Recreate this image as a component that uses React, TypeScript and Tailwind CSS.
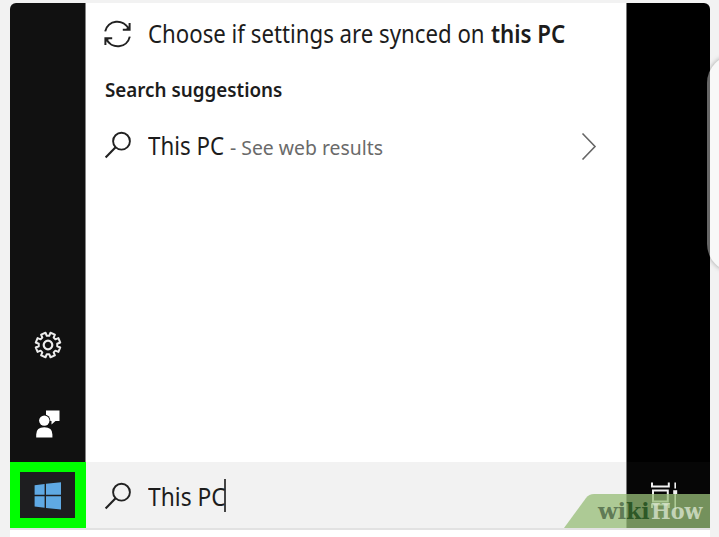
const SearchIcon = () => (
  <svg width="28" height="30" viewBox="0 0 28 30" fill="none" stroke="#222" strokeWidth="1.9">
    <circle cx="17.5" cy="11.2" r="8.4" />
    <path d="M11.6 17.2 1.6 27.4" strokeWidth="2.1" />
  </svg>
);

const SyncIcon = () => (
  <svg width="28" height="30" viewBox="0 0 28 30" fill="none" stroke="#222" strokeWidth="2">
    <path d="M1.2 12.4A12.4 12.4 0 0 1 24.6 10M25.6 4V10.8H18.8" />
    <path d="M25.8 17.6A12.4 12.4 0 0 1 2.4 20M1.4 26V19.2H8.2" />
    <path d="M25.6 6.5V10.8H21.3ZM1.4 23.5V19.2H5.7Z" fill="#222" stroke="none" />
  </svg>
);

// eight teeth, with a notch pointing straight up
const gearPoints = [22.5, 67.5, 112.5, 157.5, 202.5, 247.5, 292.5, 337.5]
  .flatMap((angle) => [
    [angle - 15, 9.3],
    [angle - 11, 12.5],
    [angle + 11, 12.5],
    [angle + 15, 9.3],
  ])
  .map(([angle, r]) => {
    const rad = (angle * Math.PI) / 180;
    return `${(r * Math.sin(rad)).toFixed(2)},${(-r * Math.cos(rad)).toFixed(2)}`;
  })
  .join(' ');

const GearIcon = () => (
  <svg width="28" height="28" viewBox="-14 -14 28 28" fill="none" stroke="#ececec" strokeWidth="2">
    <circle r="4.3" strokeWidth="2.2" />
    <polygon points={gearPoints} strokeLinejoin="round" />
  </svg>
);

const FeedbackIcon = () => (
  <svg width="26" height="28" viewBox="0 0 26 28" fill="#fff">
    <path d="M11 .6H24.5V11H20.5L16.5 14.4V11H11Z" />
    <circle cx="9.3" cy="10.6" r="6" fill="#111" />
    <circle cx="9.3" cy="10.6" r="5.2" />
    <path d="M1.2 27.6V24.4Q1.2 17.2 9.3 17.2T17.4 24.4V27.6Z" />
  </svg>
);

const WindowsIcon = () => (
  <svg width="28" height="28" viewBox="0 0 28 28" fill="#5fa9e3">
    <path d="M.6 3.3 10.6 1.9V12.8H.6ZM12 1.7 27 .2V12.8H12ZM.6 14.3H10.6V25.7L.6 24.6ZM12 14.3H27V27.4L12 25.9Z" />
  </svg>
);

const TaskViewIcon = () => (
  <svg width="28" height="28" viewBox="0 0 28 28" fill="none" stroke="#f2f2f2" strokeWidth="2">
    <path d="M1 .5V4.5H17.8V.5M1 26V22.5H17.8V26" />
    <path d="M2 8.5H16.8V19.5H2Z" />
    <path d="M24.2 .5V6.5M24.2 12V27" strokeWidth="1.6" />
    <path d="M22.2 8.2H26.2V12H22.2Z" fill="#f2f2f2" stroke="none" />
  </svg>
);

export default function App() {
  return (
    <div className="relative h-[537px] w-[719px] overflow-hidden bg-[#f2f2f2] px-[10px] pt-[3px] font-['Noto_Sans','Open_Sans',sans-serif] text-[#1c1c1c]">
      {/* Edge panel handle */}
      <div className="absolute top-[55px] left-[707px] h-[217px] w-[60px] rounded-[28px] bg-[#f8f8f8] shadow-[0_0_5px_rgba(0,0,0,0.35)]" />

      <div className="relative h-[534px] w-[700px] overflow-hidden rounded-t-[6px] bg-white">
        <div className="flex h-[525px]">
          {/* Start menu rail */}
          <aside className="flex w-[76px] shrink-0 flex-col">
            <div className="flex grow flex-col items-center justify-end border-r border-[#858585] bg-[#111] pb-[24px]">
              <GearIcon />
              <div className="mt-[51px]">
                <FeedbackIcon />
              </div>
            </div>
            <div className="flex h-[66px] items-center bg-[#00ff00] pl-[10px]">
              <div className="flex h-[46px] w-[55px] items-center justify-center bg-[#1e1e20] pt-[2px]">
                <WindowsIcon />
              </div>
            </div>
          </aside>

          {/* Results */}
          <main className="flex w-[540px] shrink-0 flex-col">
            <div className="flex h-[62px] items-center pl-[18px]">
              <SyncIcon />
              <p className="flex pl-[16px] text-[24.5px] leading-[30px] whitespace-pre">
                <span className="w-[343px] origin-left scale-x-[0.907]">Choose if settings are synced on</span>
                <span className="origin-left scale-x-[0.91] font-semibold">this PC</span>
              </p>
            </div>
            <h2 className="flex h-[50px] items-center pl-[19px] text-[20px] font-semibold whitespace-nowrap">
              <span className="origin-left scale-x-[0.94]">Search suggestions</span>
            </h2>
            <div className="flex h-[62px] items-center pl-[18px]">
              <div className="pb-[2px]">
                <SearchIcon />
              </div>
              <p className="flex items-baseline pl-[16px] text-[24.5px] leading-[30px] whitespace-nowrap">
                <span className="w-[82px] origin-left scale-x-[0.91]">This PC</span>
                <span className="origin-left scale-x-[0.945] text-[20.5px] text-[#6a6a6a]">- See web results</span>
              </p>
              <svg className="mr-[29px] ml-auto shrink-0" width="16" height="28" viewBox="0 0 16 28" fill="none" stroke="#666" strokeWidth="1.6">
                <path d="M1.5 1.5 14 14.5 1.5 27.5" />
              </svg>
            </div>
            <div className="mt-auto flex h-[66px] items-center bg-[#f2f2f2] pl-[18px]">
              <div className="pt-[2px]">
                <SearchIcon />
              </div>
              <p className="flex items-center pl-[16px] text-[24.5px] leading-[30px] whitespace-nowrap">
                <span className="w-[76px] origin-left scale-x-[0.93] pt-[3px]">This PC</span>
                <span className="h-[33px] w-[2px] bg-[#444]" />
              </p>
            </div>
          </main>

          {/* Desktop and taskbar */}
          <div className="flex grow flex-col justify-end border-l border-[#777] bg-black">
            <div className="h-[66px] bg-[#060606] pt-[20px] pl-[24px]">
              <TaskViewIcon />
            </div>
          </div>
        </div>
        <div className="h-[2px] bg-[#e2e2e2]" />

        {/* Watermark */}
        <div className="absolute top-[491px] right-0 h-[34px] w-[146px]">
          <svg className="absolute inset-0" width="146" height="34" viewBox="0 0 146 34">
            <path d="M0 34 22 4Q25 0 30 0H146V34Z" fill="#97bd78" fillOpacity="0.76" />
          </svg>
          <div className="absolute top-[3px] left-[34px] flex text-[21.5px] leading-[30px] font-bold whitespace-nowrap font-['DejaVu_Serif','Liberation_Serif',serif]">
            <span className="w-[28px] origin-left scale-x-[1.06] text-[#55704d]/90">wi</span>
            <span className="w-[25px] origin-left scale-x-[1.02] text-[#23501f]/90">ki</span>
            <span className="origin-left scale-x-[0.97] text-[#dfe9d6]/75">How</span>
          </div>
        </div>

        {/* Part of the handle that dims the card edge */}
        <div className="absolute top-[52px] left-[697px] h-[217px] w-[60px] rounded-[28px] bg-[#666]" />
      </div>
    </div>
  );
}
